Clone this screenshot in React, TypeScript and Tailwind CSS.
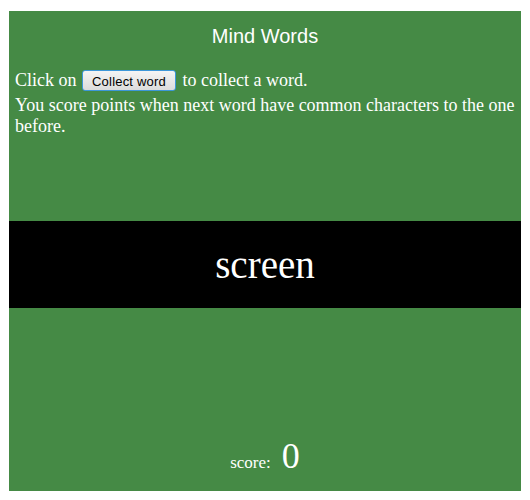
export default function App() {
  return (
    <div className="min-h-[500px] bg-white pl-[9px] pt-[11px]">
      <div className="flex h-[480px] w-[512px] flex-col bg-[#458a45] text-white">
        {/* Top: title + instructions */}
        <div className="h-[210px]">
          <h1 className="pt-[14px] text-center font-['Liberation_Sans',Arial,sans-serif] text-[20px] leading-[23px]">
            Mind Words
          </h1>
          <p className="mt-[22px] pl-[6px] font-['Liberation_Serif','Times_New_Roman',serif] text-[18px] leading-[21px]">
            Click on{' '}
            <button className="mb-[4px] ml-[1px] mr-[2px] inline-block h-[21px] w-[94px] rounded-[3px] border border-[#3d97d9] bg-gradient-to-b from-[#f4f4f4] to-[#dcdcdc] pb-[1px] pt-[3px] text-center align-baseline font-['Liberation_Sans',Arial,sans-serif] text-[13px] leading-[15px] tracking-[0.2px] text-black">
              Collect word
            </button>{' '}
            to collect a word.
            <br />
            You score points when next word have common characters to the one before.
          </p>
        </div>

        {/* Word screen */}
        <div className="flex h-[87px] items-center justify-center bg-black">
          <span className="font-['Liberation_Serif','Times_New_Roman',serif] text-[39px] leading-[44px]">screen</span>
        </div>

        {/* Score */}
        <div className="mt-auto flex items-baseline justify-center gap-[11px] pb-[15px] font-['Liberation_Serif','Times_New_Roman',serif]">
          <span className="text-[17px] leading-[21px]">score:</span>
          <span className="text-[36px] leading-[40px]">0</span>
        </div>
      </div>
    </div>
  )
}
